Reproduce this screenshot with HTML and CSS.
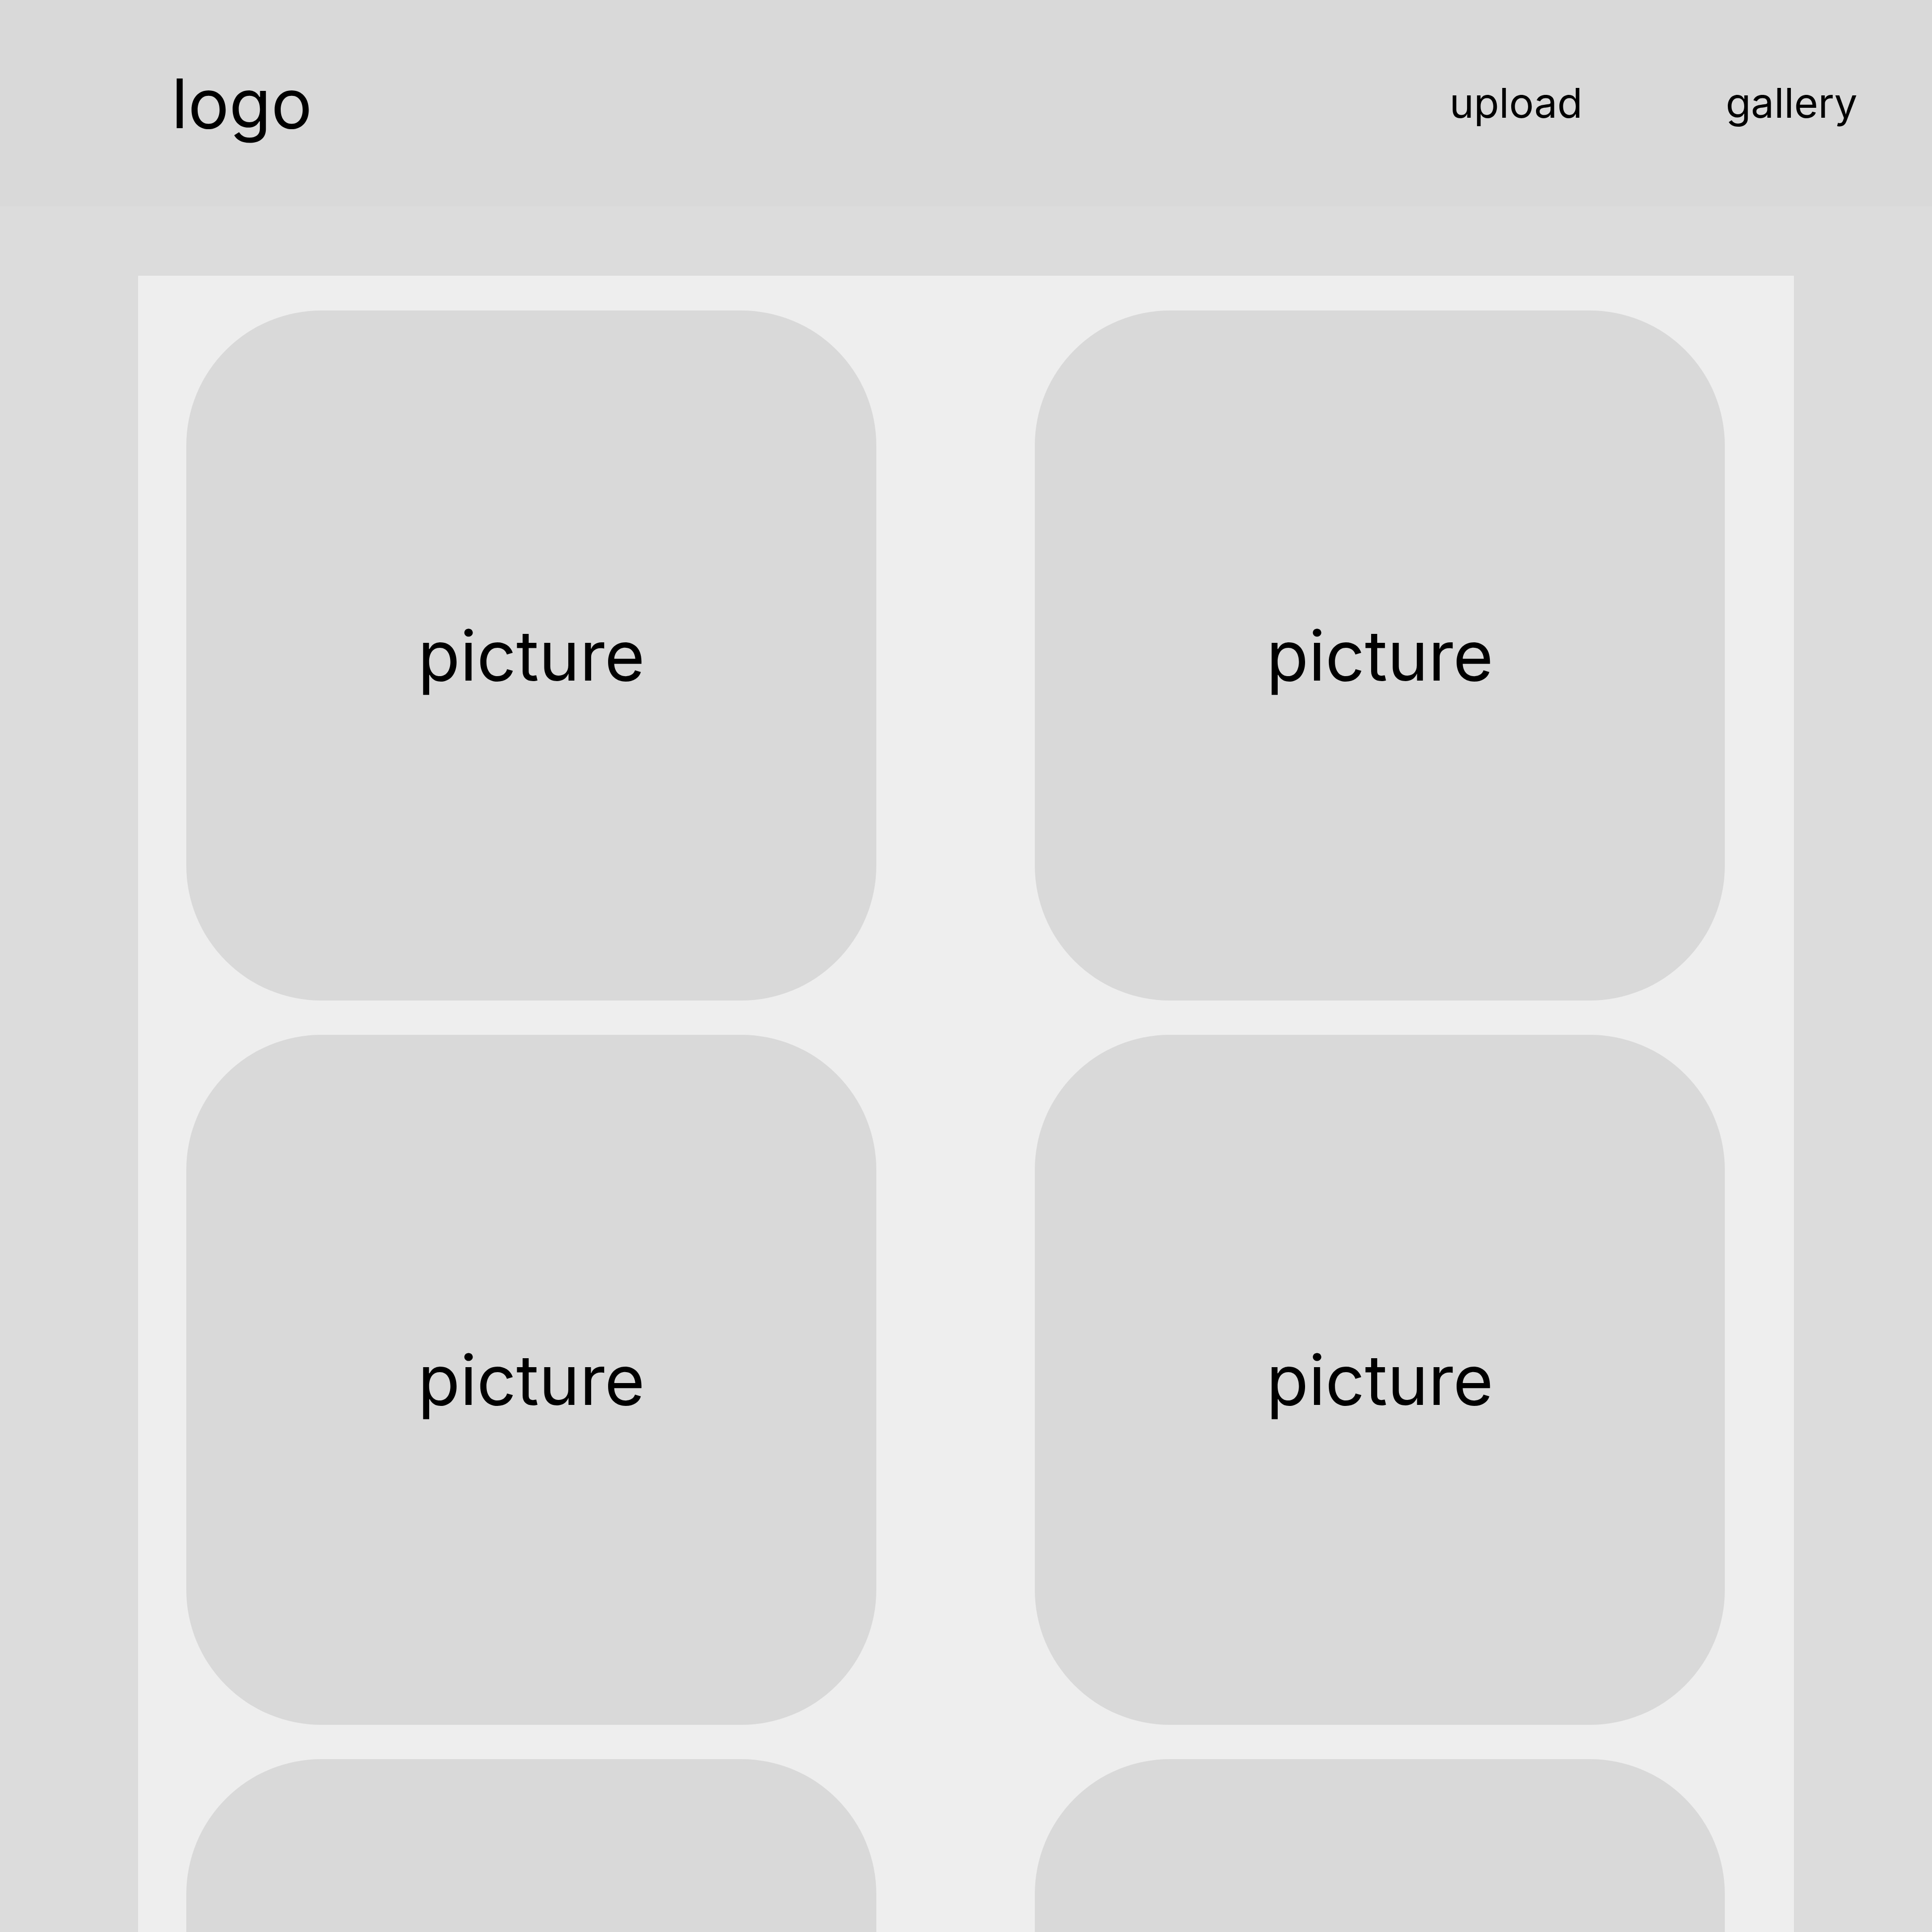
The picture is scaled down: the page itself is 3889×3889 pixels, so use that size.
FILE: index.html
```html
<!DOCTYPE html>
<html lang="en">
<head>
<meta charset="utf-8">
<title>Gallery</title>
<link rel="stylesheet" href="styles.css">
</head>
<body>
<header class="topbar">
  <div class="logo">logo</div>
  <nav class="menu">
    <a class="menu-link" href="#">upload</a>
    <a class="menu-link" href="#">gallery</a>
  </nav>
</header>
<main class="gallery">
  <div class="card"><span class="card-label">picture</span></div>
  <div class="card"><span class="card-label">picture</span></div>
  <div class="card"><span class="card-label">picture</span></div>
  <div class="card"><span class="card-label">picture</span></div>
  <div class="card"></div>
  <div class="card"></div>
</main>
</body>
</html>
```
FILE: styles.css
```css
html, body {
  margin: 0;
  padding: 0;
}

body {
  background: #dcdcdc;
  font-family: Inter, "Liberation Sans", Arial, sans-serif;
  color: #000;
  overflow: hidden;
}

.topbar {
  height: 415px;
  background: #d9d9d9;
  display: flex;
  align-items: center;
  justify-content: space-between;
  padding: 0 150px 0 345px;
  box-sizing: border-box;
}

.logo {
  font-size: 138px;
  line-height: 1;
}

.menu {
  display: flex;
  gap: 288px;
}

.menu-link {
  font-size: 83px;
  line-height: 1;
  color: #000;
  text-decoration: none;
}

.gallery {
  margin: 140px 278px 0;
  background: #eeeeee;
  padding: 70px 139px 70px 97px;
  display: grid;
  grid-template-columns: repeat(2, 1389px);
  column-gap: 319px;
  row-gap: 69px;
}

.card {
  height: 1389px;
  border-radius: 272px;
  background: #d9d9d9;
  display: flex;
  align-items: center;
  justify-content: center;
}

.card-label {
  font-size: 139px;
  line-height: 1;
}
```
